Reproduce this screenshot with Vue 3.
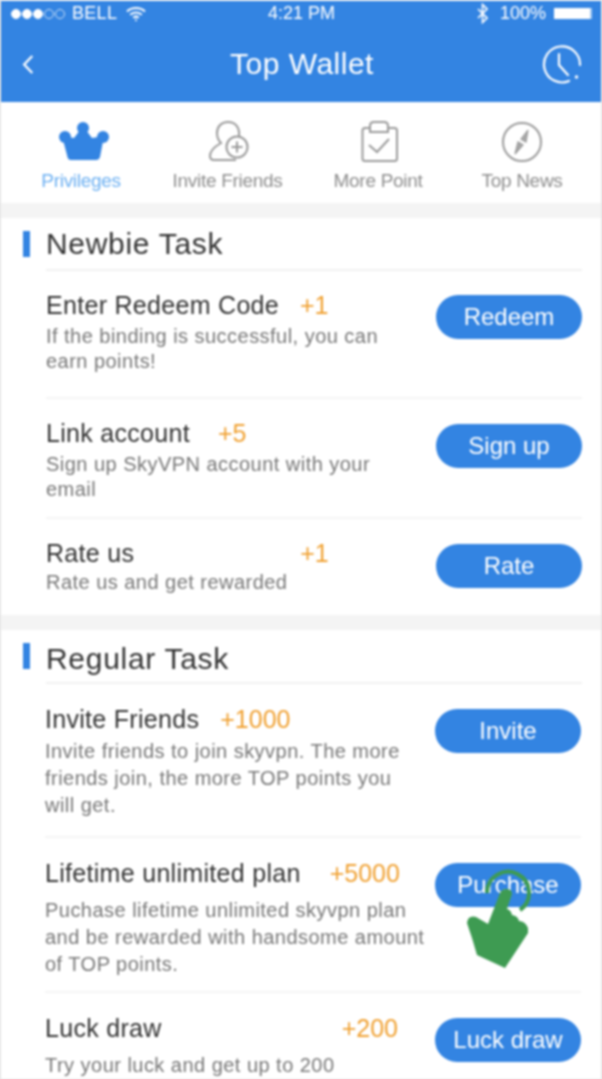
<template>
  <div class="phone">
    <header class="top">
      <div class="status">
        <div class="status-left">
          <span class="signal">
            <i v-for="n in 5" :key="n" :class="{ on: n <= 3 }"></i>
          </span>
          <span class="carrier">BELL</span>
          <svg class="wifi" width="20" height="16" viewBox="0 0 20 16" fill="none" stroke="#fff" stroke-width="2">
            <path d="M1 5.500c5-4.600 13-4.600 18 0"></path>
            <path d="M4.200 8.800c3.200-3 8.400-3 11.600 0"></path>
            <path d="M7.300 11.800c1.500-1.300 3.900-1.300 5.400 0"></path>
            <circle cx="10" cy="14.300" r="1" fill="#fff" stroke="none"></circle>
          </svg>
        </div>
        <span class="clock-text">4:21 PM</span>
        <div class="status-right">
          <svg width="11" height="21" viewBox="0 0 11 21" fill="none" stroke="#fff" stroke-width="1.600">
            <path d="M1 6l9 9-4.500 4.500V1.500L10 6l-9 9"></path>
          </svg>
          <span class="battery-text">100%</span>
          <span class="battery"></span>
        </div>
      </div>
      <div class="nav">
        <svg class="back" width="12" height="21" viewBox="0 0 14 24" fill="none" stroke="#fff" stroke-width="2.600">
          <path d="M12 2L2.500 12l9.500 10"></path>
        </svg>
        <span class="nav-title">Top Wallet</span>
        <svg class="history" width="40" height="40" viewBox="0 0 40 40" fill="none" stroke="#fff" stroke-width="2.200" stroke-linecap="round">
          <path d="M27 37A18 18 0 1 1 38 21"></path>
          <path d="M17 10v11l9 10"></path>
          <circle cx="34.500" cy="33" r="1.700" fill="#fff" stroke="none"></circle>
        </svg>
      </div>
    </header>

    <nav class="tabs">
      <div class="tab active">
        <svg class="crown" width="50" height="42" viewBox="0 -1 50 42" fill="#3384e2">
          <circle cx="24" cy="6" r="6"></circle>
          <circle cx="6" cy="15" r="6"></circle>
          <circle cx="44" cy="15" r="6"></circle>
          <path d="M3 14l12 2 9-12 9 12 12-2-4 21q-1 3-4 3H12q-3 0-3.500-3z"></path>
        </svg>
        <span>Privileges</span>
      </div>
      <div class="tab">
        <svg class="person" width="42" height="42" viewBox="0 0 42 42" fill="none" stroke="#9a9a9a" stroke-width="2">
          <path d="M30 15C31 6 26 1 19 1 12 1 8 6 8 12c0 5 2 8 4 10-7 4-11 9-11 13 0 3 1 4 4 4h22"></path>
          <circle cx="28" cy="26" r="10.500"></circle>
          <path d="M28 20.500v11M22.500 26h11"></path>
        </svg>
        <span>Invite Friends</span>
      </div>
      <div class="tab">
        <svg class="board" width="38" height="42" viewBox="0 0 38 42" fill="none" stroke="#9a9a9a" stroke-width="2">
          <path d="M9 7H4Q1.500 7 1.500 9.500v28Q1.500 40 4 40h29.500q2.500 0 2.500-2.500v-28Q36 7 33.500 7H27"></path>
          <path d="M9 11V5q0-4 4-4h10q4 0 4 4v6z"></path>
          <path d="M8 24l8 7 12-13"></path>
        </svg>
        <span>More Point</span>
      </div>
      <div class="tab">
        <svg width="42" height="42" viewBox="0 0 42 42" fill="none" stroke="#9a9a9a" stroke-width="2">
          <circle cx="21" cy="21" r="19"></circle>
          <path d="M27 9l-7 9 5 3zM14 33l8-9-5-3z" fill="#a8a8a8" stroke-width="1.200"></path>
        </svg>
        <span>Top News</span>
      </div>
    </nav>

    <section v-for="section in sections" :key="section.title" class="section" :class="section.cls">
      <h2 class="heading">
        <i class="mark"></i>
        <span class="heading-text">{{ section.title }}</span>
      </h2>
      <div v-for="task in section.tasks" :key="task.title" class="task">
        <div class="task-body">
          <div class="task-title">
            <span>{{ task.title }}</span>
            <b :style="{ marginLeft: task.gap + 'px' }">{{ task.points }}</b>
          </div>
          <p class="task-desc">{{ task.desc }}</p>
        </div>
        <button class="action">{{ task.action }}</button>
      </div>
    </section>

    <svg class="hand" width="182" height="130" viewBox="0 0 182 130" fill="#3e9b52">
      <path d="M67 43A21 21 0 1 1 100 60" fill="none" stroke="#3e9b52" stroke-width="4"></path>
      <path d="M80 43L68 74 56 67q-8-2-9 6l5 15 5 17 28 13 23-35v-5q-3-7-9-7-1-5-7-6-1-5-5-6l5-15q0-5-6-5-4 0-6 4z"></path>
    </svg>
  </div>
</template>

<script setup>
const sections = [
  {
    title: 'Newbie Task',
    cls: 'newbie',
    tasks: [
      {
        title: 'Enter Redeem Code',
        points: '+1',
        gap: 21,
        desc: 'If the binding is successful, you can earn points!',
        action: 'Redeem'
      },
      {
        title: 'Link account',
        points: '+5',
        gap: 28,
        desc: 'Sign up SkyVPN account with your email',
        action: 'Sign up'
      },
      {
        title: 'Rate us',
        points: '+1',
        gap: 166,
        desc: 'Rate us and get rewarded',
        action: 'Rate'
      }
    ]
  },
  {
    title: 'Regular Task',
    cls: 'regular',
    tasks: [
      {
        title: 'Invite Friends',
        points: '+1000',
        gap: 21,
        desc: 'Invite friends to join skyvpn. The more friends join, the more TOP points you will get.',
        action: 'Invite'
      },
      {
        title: 'Lifetime unlimited plan',
        points: '+5000',
        gap: 29,
        desc: 'Puchase lifetime unlimited skyvpn plan and be rewarded with handsome amount of TOP points.',
        action: 'Purchase'
      },
      {
        title: 'Luck draw',
        points: '+200',
        gap: 180,
        desc: 'Try your luck and get up to 200',
        action: 'Luck draw'
      }
    ]
  }
]
</script>

<style>
html,
body {
  margin: 0;
  background: #e6e6e6;
}
</style>

<style scoped>
.phone {
  position: relative;
  width: 600px;
  height: 1079px;
  margin-left: 1px;
  overflow: hidden;
  background: #fff;
  font-family: "Liberation Sans", Arial, sans-serif;
  filter: blur(0.8px);
}

.top {
  margin-top: 1px;
  height: 101px;
  background: #3384e2;
  color: #fff;
}

.status {
  display: flex;
  align-items: center;
  justify-content: space-between;
  height: 25px;
  padding: 0 9px 0 10px;
  font-size: 18px;
}

.status-left,
.status-right {
  display: flex;
  align-items: center;
  width: 170px;
}

.status-right {
  justify-content: flex-end;
}

.signal {
  display: flex;
  gap: 1px;
  margin-right: 7px;
}

.signal i {
  width: 10px;
  height: 10px;
  border: 1px solid #cfe2f8;
  border-radius: 50%;
  box-sizing: border-box;
}

.signal i.on {
  background: #fff;
  border-color: #fff;
}

.carrier {
  margin-right: 9px;
  letter-spacing: 0.3px;
}

.battery-text {
  margin: 0 8px 0 12px;
}

.battery {
  width: 36px;
  height: 11px;
  background: #fff;
  border-right: 2px solid #a8ccf3;
}

.nav {
  display: grid;
  grid-template-columns: 1fr auto 1fr;
  align-items: center;
  height: 76px;
  padding: 0 19px 0 21px;
}

.history {
  justify-self: end;
}

.nav-title {
  font-size: 30px;
  letter-spacing: 0.5px;
}

.tabs {
  display: grid;
  grid-template-columns: 146px 147px 154px 134px;
  height: 101px;
  padding-left: 7px;
}

.tab {
  display: flex;
  flex-direction: column;
  align-items: center;
  padding-top: 19px;
  color: #8d8d8d;
  font-size: 19px;
  letter-spacing: -0.3px;
}

.tab span {
  margin-top: 7px;
}

.tab.active {
  color: #6cb0f2;
}

.crown {
  margin-left: 5px;
}

.person {
  margin-left: 4px;
}

.board {
  margin-left: 3px;
}

.section {
  border-top: 15px solid #f4f4f4;
}

.heading {
  display: flex;
  align-items: stretch;
  gap: 16px;
  margin: 0 19px 0 22px;
  color: #333;
  font-size: 30px;
  font-weight: 400;
  letter-spacing: 0.7px;
}

.mark {
  width: 7px;
  height: 26px;
  margin-top: 13px;
  background: #3384e2;
}

.heading-text {
  flex: 1;
  height: 51px;
  line-height: 52px;
  border-bottom: 2px solid #f1f1f1;
}

.regular .heading-text {
  height: 52px;
  line-height: 57px;
}

.task {
  display: flex;
  justify-content: space-between;
  margin: 0 19px 0 45px;
  border-bottom: 2px solid #f4f4f4;
  padding-top: 22px;
  box-sizing: border-box;
}

.task:last-child {
  border-bottom: 0;
}

.newbie .task {
  height: 120px;
}

.newbie .task:first-of-type {
  height: 128px;
}

.newbie .task:last-child {
  height: 96px;
}

.regular .task {
  height: 155px;
  margin-left: 44px;
  margin-right: 20px;
  padding-top: 23px;
}

.regular .task:first-of-type {
  height: 154px;
}

.task-title {
  display: flex;
  align-items: center;
  height: 24px;
  color: #333;
  font-size: 25px;
  letter-spacing: 0.3px;
  white-space: nowrap;
}

.task-title b {
  color: #f0a030;
  font-weight: 400;
  letter-spacing: 0;
}

.task-desc {
  width: 345px;
  margin: 7px 0 0;
  color: #777;
  font-size: 20px;
  line-height: 25px;
  letter-spacing: 0.47px;
}

.newbie .task:last-child .task-desc {
  margin-top: 5px;
}

.regular .task-desc {
  width: 380px;
  margin-top: 12px;
  line-height: 27px;
}

.regular .task:first-of-type .task-desc {
  margin-top: 7px;
}

.action {
  flex-shrink: 0;
  width: 146px;
  height: 44px;
  margin-top: 3px;
  border: 0;
  border-radius: 22px;
  background: #3384e2;
  color: #fff;
  font-family: inherit;
  font-size: 24px;
}

.newbie .task:first-of-type .action,
.regular .action {
  margin-top: 2px;
}

.hand {
  position: absolute;
  left: 419px;
  top: 850px;
}
</style>
